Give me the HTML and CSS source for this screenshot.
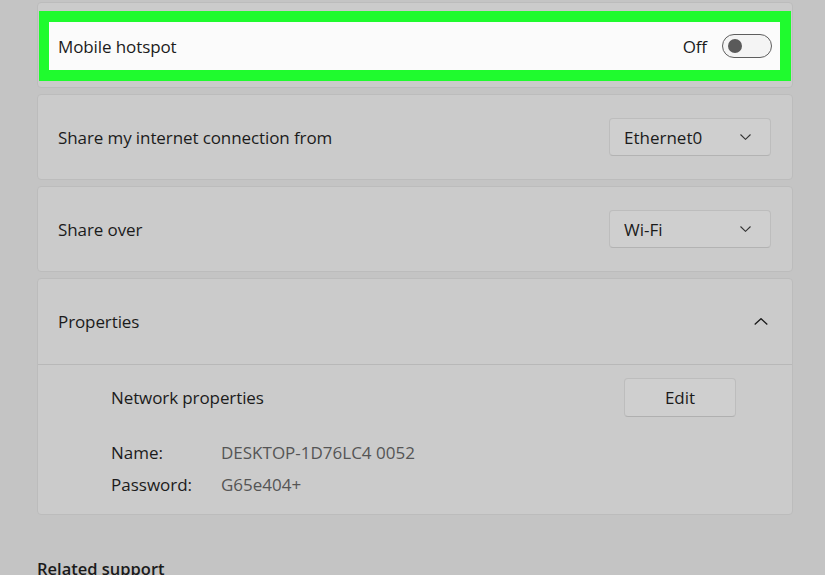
FILE: index.html
```html
<!DOCTYPE html>
<html lang="en">
<head>
<meta charset="utf-8">
<title>Mobile hotspot</title>
<link rel="stylesheet" href="styles.css">
</head>
<body>
<main class="page">
  <section class="card card-hotspot">
    <div class="highlight">
      <span class="label">Mobile hotspot</span>
      <div class="toggle-group">
        <span class="label">Off</span>
        <span class="toggle"><span class="knob"></span></span>
      </div>
    </div>
  </section>

  <section class="card row">
    <span class="label">Share my internet connection from</span>
    <div class="dropdown">
      <span>Ethernet0</span>
      <svg class="chev" width="11" height="6" viewBox="0 0 11 6"><path d="M0.5 0.5 L5.5 5.3 L10.5 0.5" fill="none" stroke="#333" stroke-width="1.1"/></svg>
    </div>
  </section>

  <section class="card row">
    <span class="label">Share over</span>
    <div class="dropdown">
      <span>Wi-Fi</span>
      <svg class="chev" width="11" height="6" viewBox="0 0 11 6"><path d="M0.5 0.5 L5.5 5.3 L10.5 0.5" fill="none" stroke="#333" stroke-width="1.1"/></svg>
    </div>
  </section>

  <section class="card props">
    <div class="props-head">
      <span class="label">Properties</span>
      <svg class="chev-up" width="14" height="7" viewBox="0 0 14 7"><path d="M0.7 6.5 L7 0.7 L13.3 6.5" fill="none" stroke="#1a1a1a" stroke-width="1.3"/></svg>
    </div>
    <div class="props-body">
      <div class="net-row">
        <span class="label">Network properties</span>
        <button class="btn">Edit</button>
      </div>
      <dl class="info">
        <dt>Name:</dt><dd>DESKTOP-1D76LC4 0052</dd>
        <dt>Password:</dt><dd>G65e404+</dd>
      </dl>
    </div>
  </section>

  <h2 class="related">Related support</h2>
</main>
</body>
</html>
```

FILE: styles.css
```css
* { box-sizing: border-box; }
html, body { margin: 0; padding: 0; }
body {
  background: #c4c4c4;
  font-family: "Open Sans", "Noto Sans", "Liberation Sans", sans-serif;
  color: #1b1b1b;
  font-size: 17px;
  overflow: hidden;
  height: 575px;
}
.page {
  width: 756px;
  margin-left: 37px;
  padding-top: 2px;
  display: flex;
  flex-direction: column;
  gap: 6px;
}
.card {
  background: #cbcbcb;
  border: 1px solid #bcbcbc;
  border-radius: 4px;
}
.label { font-size: 17px; letter-spacing: -0.1px; }

.card-hotspot { padding: 8px 1px 6px 1px; }
.highlight {
  height: 70px;
  border: 11px solid #1ffb2e;
  border-left-width: 10px;
  background: #fbfbfb;
  display: flex;
  align-items: center;
  justify-content: space-between;
  padding: 0 8px 0 9px;
}
.toggle-group { display: flex; align-items: center; gap: 15px; }
.toggle {
  width: 50px;
  height: 24px;
  border: 1.5px solid #5e5e5e;
  border-radius: 12px;
  background: #f4f4f4;
  display: flex;
  align-items: center;
  padding-left: 5px;
}
.knob {
  width: 14px;
  height: 14px;
  border-radius: 50%;
  background: #5a5a5a;
}

.row {
  height: 86px;
  display: flex;
  align-items: center;
  justify-content: space-between;
  padding: 0 21px 0 20px;
}
.dropdown {
  width: 162px;
  height: 38px;
  background: #cfcfcf;
  border: 1px solid #bdbdbd;
  border-bottom-color: #b3b3b3;
  border-radius: 4px;
  display: flex;
  align-items: center;
  justify-content: space-between;
  padding: 0 19px 0 14px;
  font-size: 17px;
}
.chev { display: block; }

.props { display: flex; flex-direction: column; }
.props-head {
  height: 86px;
  border-bottom: 1px solid #b8b8b8;
  display: flex;
  align-items: center;
  justify-content: space-between;
  padding: 0 24px 0 20px;
}
.chev-up { display: block; }
.props-body { padding: 13px 56px 17px 73px; }
.net-row {
  display: flex;
  align-items: center;
  justify-content: space-between;
}
.btn {
  width: 112px;
  height: 39px;
  background: #cfcfcf;
  border: 1px solid #bdbdbd;
  border-bottom-color: #b0b0b0;
  border-radius: 4px;
  font-family: inherit;
  font-size: 17px;
  color: #1b1b1b;
  padding: 0;
}
.info {
  margin: 24px 0 0 0;
  display: grid;
  grid-template-columns: 110px auto;
  row-gap: 8px;
  font-size: 17px;
  line-height: 24px;
}
.info dt { margin: 0; color: #1b1b1b; }
.info dd { margin: 0; color: #555; }

.related {
  margin: 36px 0 0 0;
  font-size: 16.5px;
  font-weight: 600;
  color: #1b1b1b;
}
```
